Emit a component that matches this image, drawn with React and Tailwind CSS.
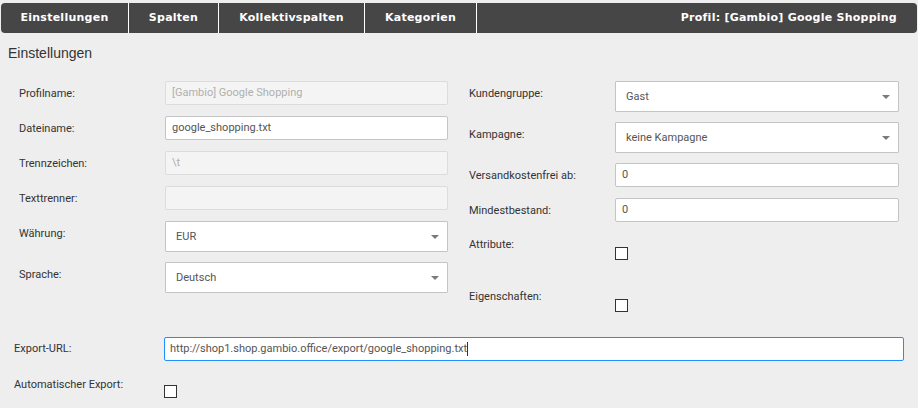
import React from "react";

function Label({ children, className = "" }) {
  return (
    <div className={`shrink-0 text-[11px] leading-[14px] text-[#333333] ${className}`}>
      {children}
    </div>
  );
}

function TextBox({ value, disabled, w = "w-[283px]" }) {
  return (
    <div
      className={`${w} h-[24px] flex items-center px-[6px] rounded-[2px] border text-[11px] ${
        disabled
          ? "bg-[#f4f4f4] border-[#dcdcdc] text-[#b0b0b0]"
          : "bg-white border-[#c4c4c4] text-[#555555]"
      }`}
    >
      {value}
    </div>
  );
}

function SelectBox({ value, w = "w-[283px]" }) {
  return (
    <div
      className={`${w} h-[31px] flex items-center justify-between pl-[10px] pr-[8px] pt-[1px] bg-white border border-[#c4c4c4] rounded-[1px] text-[11px] text-[#555555]`}
    >
      <span>{value}</span>
      <svg width="8" height="4" viewBox="0 0 8 4" className="block">
        <path d="M0 0 H8 L4 4 Z" fill="#7a7a7a" />
      </svg>
    </div>
  );
}

function Check({ className = "" }) {
  return <div className={`w-[13px] h-[13px] border border-[#333333] bg-white ${className}`} />;
}

function Row({ label, children, className = "", labelW = "w-[146px]" }) {
  return (
    <div className={`flex items-start ${className}`}>
      <Label className={`${labelW} pt-[6px]`}>{label}</Label>
      {children}
    </div>
  );
}

export default function App() {
  return (
    <div
      className="w-[918px] h-[408px] overflow-hidden bg-[#eeeeee] pt-[3px]"
      style={{ fontFamily: "Roboto, 'Liberation Sans', Arial, sans-serif" }}
    >
      <div
        className="mx-[1px] h-[30px] flex items-stretch rounded-[4px] bg-[#464646] text-white font-bold text-[11px] tracking-[0.25px]"
        style={{ fontFamily: "'DejaVu Sans', Verdana, sans-serif" }}
      >
        <div className="w-[128px] flex items-center justify-center border-r border-white">
          Einstellungen
        </div>
        <div className="w-[90px] flex items-center justify-center border-r border-white">
          Spalten
        </div>
        <div className="w-[146px] flex items-center justify-center border-r border-white">
          Kollektivspalten
        </div>
        <div className="w-[112px] flex items-center justify-center border-r border-white">
          Kategorien
        </div>
        <div className="flex-1 flex items-center justify-end pr-[20px]">
          Profil: [Gambio] Google Shopping
        </div>
      </div>

      <div
        className="mt-[12px] ml-[8px] text-[14px] leading-[16px] text-[#333333]"
        style={{ fontFamily: "'Liberation Sans', Arial, sans-serif" }}
      >
        Einstellungen
      </div>

      <div className="mt-[20px] flex">
        {/* left column */}
        <div className="w-[450px] pl-[19px] flex flex-col">
          <Row label="Profilname:">
            <TextBox value="[Gambio] Google Shopping" disabled />
          </Row>
          <Row label="Dateiname:" className="mt-[11px]">
            <TextBox value="google_shopping.txt" />
          </Row>
          <Row label="Trennzeichen:" className="mt-[11px]">
            <TextBox value="\t" disabled />
          </Row>
          <Row label="Texttrenner:" className="mt-[11px]">
            <TextBox value="" disabled />
          </Row>
          <Row label="Währung:" className="mt-[11px]">
            <SelectBox value="EUR" />
          </Row>
          <Row label="Sprache:" className="mt-[10px]">
            <SelectBox value="Deutsch" />
          </Row>
        </div>

        {/* right column */}
        <div className="w-[450px] pl-[19px] flex flex-col">
          <Row label="Kundengruppe:">
            <SelectBox value="Gast" w="w-[284px]" />
          </Row>
          <Row label="Kampagne:" className="mt-[10px]">
            <SelectBox value="keine Kampagne" w="w-[284px]" />
          </Row>
          <Row label="Versandkostenfrei ab:" className="mt-[10px]">
            <TextBox value="0" w="w-[284px]" />
          </Row>
          <Row label="Mindestbestand:" className="mt-[11px]">
            <TextBox value="0" w="w-[284px]" />
          </Row>
          <div className="mt-[16px] flex items-start h-[52px]">
            <Label className="w-[146px]">Attribute:</Label>
            <Check className="mt-[9px]" />
          </div>
          <div className="flex items-start">
            <Label className="w-[146px]">Eigenschaften:</Label>
            <Check className="mt-[9px]" />
          </div>
        </div>
      </div>

      <div className="mt-[25px] pl-[14px] flex flex-col">
        <div className="flex items-start">
          <Label className="w-[150px] pt-[5px]">Export-URL:</Label>
          <div className="w-[740px] h-[24px] flex items-center px-[5px] bg-white border border-[#1e90ff] rounded-[2px] text-[11px] text-[#555555]">
            <span>http://shop1.shop.gambio.office/export/google_shopping.txt</span>
            <span className="inline-block w-[1px] h-[14px] bg-[#333333]" />
          </div>
        </div>
        <div className="mt-[17px] flex items-start">
          <Label className="w-[150px]">Automatischer Export:</Label>
          <Check className="mt-[7px]" />
        </div>
      </div>
    </div>
  );
}
